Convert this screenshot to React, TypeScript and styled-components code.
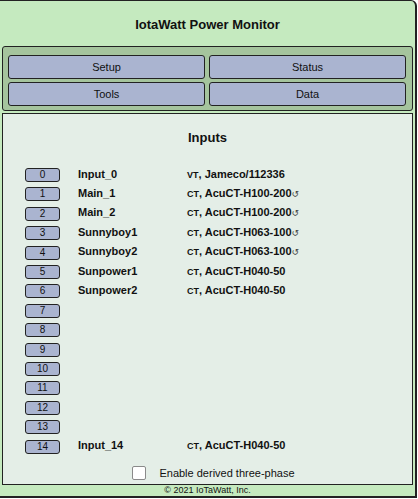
import * as React from 'react';
import styled, { createGlobalStyle } from 'styled-components';

const GlobalStyle = createGlobalStyle`
  html, body {
    margin: 0;
    padding: 0;
    background: #ffffff;
    overflow: hidden;
  }
  body {
    font-family: "Liberation Sans", Arial, sans-serif;
    color: #111;
  }
`;

interface Input {
  index: number;
  name?: string;
  kind?: 'VT' | 'CT';
  model?: string;
  reversed?: boolean;
}

const inputs: Input[] = [
  { index: 0, name: 'Input_0', kind: 'VT', model: 'Jameco/112336' },
  { index: 1, name: 'Main_1', kind: 'CT', model: 'AcuCT-H100-200', reversed: true },
  { index: 2, name: 'Main_2', kind: 'CT', model: 'AcuCT-H100-200', reversed: true },
  { index: 3, name: 'Sunnyboy1', kind: 'CT', model: 'AcuCT-H063-100', reversed: true },
  { index: 4, name: 'Sunnyboy2', kind: 'CT', model: 'AcuCT-H063-100', reversed: true },
  { index: 5, name: 'Sunpower1', kind: 'CT', model: 'AcuCT-H040-50' },
  { index: 6, name: 'Sunpower2', kind: 'CT', model: 'AcuCT-H040-50' },
  { index: 7 },
  { index: 8 },
  { index: 9 },
  { index: 10 },
  { index: 11 },
  { index: 12 },
  { index: 13 },
  { index: 14, name: 'Input_14', kind: 'CT', model: 'AcuCT-H040-50' },
];

const Page = styled.div`
  box-sizing: border-box;
  width: 420px;
  height: 498px;
  margin-left: -3px;
  background: #c5eabf;
  border: 1px solid #222;
  border-right-width: 2px;
  border-bottom-width: 2px;
  border-radius: 0 6px 0 0;
  padding: 0 2px 0 4px;
  display: flex;
  flex-direction: column;
`;

const Header = styled.h1`
  margin: 0;
  height: 45px;
  padding-top: 2px;
  box-sizing: border-box;
  display: flex;
  align-items: center;
  justify-content: center;
  font-size: 13px;
  font-weight: bold;
`;

const Nav = styled.nav`
  box-sizing: border-box;
  height: 66px;
  background: #a5c49d;
  border: 1px solid #222;
  border-radius: 3px;
  padding: 8px 6px 4px 5px;
  display: grid;
  grid-template-columns: 1fr 1fr;
  grid-template-rows: 24px 24px;
  gap: 3px 4px;
`;

const NavButton = styled.button`
  box-sizing: border-box;
  background: #aab4d0;
  border: 1.5px solid #222;
  border-radius: 3px;
  font-family: "Liberation Sans", Arial, sans-serif;
  font-size: 11px;
  color: #111;
  padding: 0;
`;

const Main = styled.main`
  box-sizing: border-box;
  margin-top: 2px;
  height: 374px;
  background: #e4eee7;
  border: 1px solid #222;
  padding: 14px 0 0 22px;
  display: flex;
  flex-direction: column;
`;

const Title = styled.h2`
  margin: 0 0 0 -22px;
  height: 18px;
  display: flex;
  align-items: center;
  justify-content: center;
  font-size: 13px;
  font-weight: bold;
`;

const Rows = styled.div`
  margin-top: 19px;
  display: flex;
  flex-direction: column;
`;

const Row = styled.div`
  height: 19.4px;
  display: flex;
  align-items: center;
  font-size: 11px;
  font-weight: bold;
`;

const IndexButton = styled.button`
  box-sizing: border-box;
  width: 35px;
  height: 14px;
  margin-right: 18px;
  padding: 0;
  background: #aab4d0;
  border: 1.5px solid #222;
  border-radius: 3px;
  font-family: "Liberation Sans", Arial, sans-serif;
  font-size: 10px;
  line-height: 10px;
  color: #111;
`;

const Name = styled.span`
  width: 109px;
  margin-top: -3px;
`;

const Model = styled.span`
  margin-top: -3px;
`;

const Kind = styled.span`
  font-size: 9px;
`;

const Reverse = styled.span`
  font-family: "DejaVu Sans", sans-serif;
  font-weight: normal;
  font-size: 9px;
  color: #444;
`;

const PhaseRow = styled.label`
  margin: 10px 0 0 -10px;
  display: flex;
  align-items: center;
  justify-content: center;
  font-size: 11px;
`;

const Check = styled.span`
  box-sizing: border-box;
  width: 14px;
  height: 14px;
  margin-right: 13px;
  background: #fff;
  border: 1px solid #8a8a8a;
  border-radius: 2px;
`;

const Footer = styled.footer`
  flex: 1;
  display: flex;
  align-items: center;
  justify-content: center;
  font-size: 9px;
  padding-bottom: 1px;
`;

export default function App() {
  return (
    <>
      <GlobalStyle />
      <Page>
        <Header>IotaWatt Power Monitor</Header>
        <Nav>
          <NavButton>Setup</NavButton>
          <NavButton>Status</NavButton>
          <NavButton>Tools</NavButton>
          <NavButton>Data</NavButton>
        </Nav>
        <Main>
          <Title>Inputs</Title>
          <Rows>
            {inputs.map((i) => (
              <Row key={i.index}>
                <IndexButton>{i.index}</IndexButton>
                <Name>{i.name}</Name>
                {i.kind && (
                  <Model>
                    <Kind>{i.kind}</Kind>, {i.model}
                    {i.reversed && <Reverse>↺</Reverse>}
                  </Model>
                )}
              </Row>
            ))}
          </Rows>
          <PhaseRow>
            <Check />
            Enable derived three-phase
          </PhaseRow>
        </Main>
        <Footer>© 2021 IoTaWatt, Inc.</Footer>
      </Page>
    </>
  );
}
